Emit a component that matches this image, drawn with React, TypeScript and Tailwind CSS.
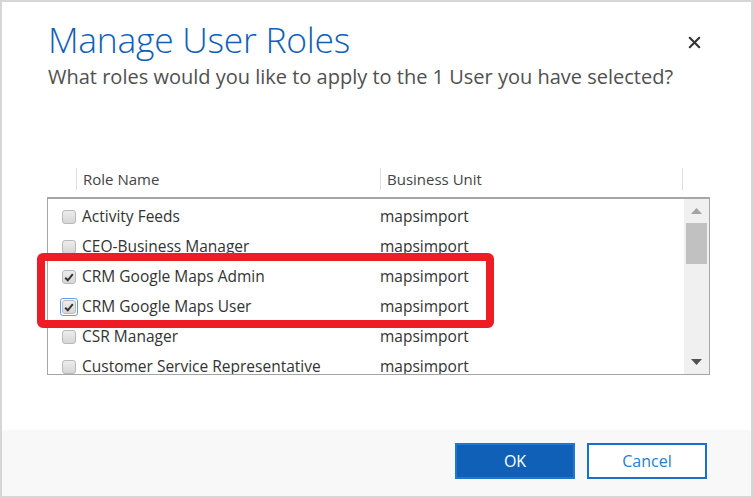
import { X } from "lucide-react";

interface Role {
  name: string;
  unit: string;
  checked: boolean;
  focused?: boolean;
}

const roles: Role[] = [
  { name: "Activity Feeds", unit: "mapsimport", checked: false },
  { name: "CEO-Business Manager", unit: "mapsimport", checked: false },
  { name: "CRM Google Maps Admin", unit: "mapsimport", checked: true },
  { name: "CRM Google Maps User", unit: "mapsimport", checked: true, focused: true },
  { name: "CSR Manager", unit: "mapsimport", checked: false },
  { name: "Customer Service Representative", unit: "mapsimport", checked: false },
];

function Checkbox({ checked, focused }: { checked: boolean; focused?: boolean }) {
  return (
    <div
      className={
        focused
          ? "flex h-[18px] w-[18px] items-center justify-center rounded-[3px] border border-[#5f9cf5]"
          : "flex h-[18px] w-[18px] items-center justify-center"
      }
    >
      <div className="flex h-[14px] w-[14px] items-center justify-center rounded-[3px] border border-[#b9b9b9] bg-gradient-to-b from-[#ededed] to-[#d6d6d6]">
        {checked && (
          <svg width="10" height="9" viewBox="0 0 10 9">
            <path d="M1.2 4.8 L3.8 7.3 L8.8 1.2" fill="none" stroke="#333" strokeWidth="2" />
          </svg>
        )}
      </div>
    </div>
  );
}

export default function App() {
  return (
    <div
      className="relative flex h-[498px] w-[753px] flex-col border-2 border-[#d6d6d6] bg-white"
      style={{ fontFamily: '"Open Sans", "Noto Sans", sans-serif' }}
    >
      <div className="flex flex-1 flex-col pl-[46px] pr-[42px]">
        <div className="mt-[14px] flex items-start justify-between">
          <h1 className="text-[35.5px] font-light leading-[46px] tracking-[-0.3px] text-[#1160b7]">
            Manage User Roles
          </h1>
          <button className="mt-[17px] mr-[5px] text-[#333]">
            <X size={19} strokeWidth={2.6} />
          </button>
        </div>
        <p className="mt-[2px] text-[20px] leading-[26px] text-[#505050]">
          What roles would you like to apply to the 1 User you have selected?
        </p>

        <div className="mt-[78px] flex h-[22px] text-[15px] text-[#444]">
          <div className="w-[28px]" />
          <div className="flex w-[304px] items-center border-l border-[#dedede] pl-[6px]">
            Role Name
          </div>
          <div className="flex w-[303px] items-center border-x border-[#dedede] pl-[6px]">
            Business Unit
          </div>
        </div>

        <div className="ml-[-1px] mt-[7px] flex h-[178px] w-[663px] overflow-hidden border border-t-2 border-[#a6a6a6]">
          <div className="flex flex-1 flex-col pt-[3px] text-[15.5px] text-[#333]">
            {roles.map((role) => (
              <div key={role.name} className="flex h-[30px] shrink-0 items-center">
                <div className="ml-[12px] w-[22px]">
                  <Checkbox checked={role.checked} focused={role.focused} />
                </div>
                <span className="w-[298px] leading-none">{role.name}</span>
                <span className="leading-none">{role.unit}</span>
              </div>
            ))}
          </div>
          <div className="flex w-[25px] flex-col items-center bg-[#f0f0f0]">
            <div className="flex h-[24px] items-center">
              <svg width="11" height="6" viewBox="0 0 11 6">
                <path d="M5.5 0 L11 6 L0 6 Z" fill="#a3a3a3" />
              </svg>
            </div>
            <div className="h-[41px] w-[21px] bg-[#c1c1c1]" />
            <div className="flex-1" />
            <div className="flex h-[24px] items-center">
              <svg width="11" height="6" viewBox="0 0 11 6">
                <path d="M0 0 L11 0 L5.5 6 Z" fill="#505050" />
              </svg>
            </div>
          </div>
        </div>
      </div>

      <div className="flex h-[66px] items-start justify-end gap-[12px] bg-[#f8f8f8] pr-[44px] pt-[13px]">
        <button className="h-[36px] w-[120px] border-2 border-[#1e78d2] bg-[#1160b7] text-[16px] text-white">
          OK
        </button>
        <button className="h-[36px] w-[120px] border-2 border-[#1670cc] bg-white text-[16px] text-[#2a7ccc]">
          Cancel
        </button>
      </div>

      <div className="pointer-events-none absolute left-[35px] top-[251px] h-[75px] w-[457px] rounded-[6px] border-[8px] border-[#ee1c25]" />
    </div>
  );
}
